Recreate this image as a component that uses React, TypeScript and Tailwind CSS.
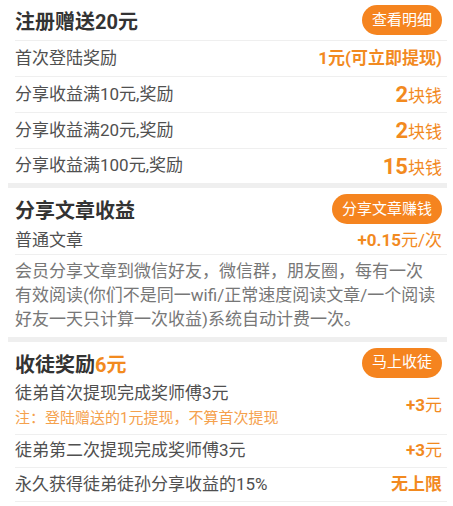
import React from 'react';

const font = { fontFamily: 'Roboto, "Noto Sans CJK SC", sans-serif' };

function Pill({ label }: { label: string }) {
  return (
    <button className="h-[30px] px-[10px] rounded-full bg-[#f5841f] text-white text-[15px] leading-none">
      {label}
    </button>
  );
}

function Row({ left, right, last = false, h = 'h-[36px]' }: { left: React.ReactNode; right: React.ReactNode; last?: boolean; h?: string }) {
  return (
    <div className={`flex items-center justify-between pr-[5px] ${h} ${last ? '' : 'border-b border-[#efefef]'}`}>
      <span className="text-[17px] text-[#505050]">{left}</span>
      <span className="text-[17px] text-[#f28a1f]">{right}</span>
    </div>
  );
}

export default function App() {
  return (
    <div className="w-[453px] h-[506px] overflow-hidden bg-white pl-[8px] pr-[6px]" style={font}>
      {/* 注册赠送 */}
      <section className="pl-[7px]">
        <div className="flex items-center justify-between h-[41px] pr-[5px] border-b border-[#efefef]">
          <h2 className="translate-y-[2px] text-[20px] font-bold text-[#333]">注册赠送20元</h2>
          <Pill label="查看明细" />
        </div>
        <Row left="首次登陆奖励" right={<b>1元(可立即提现)</b>} />
        <Row left="分享收益满10元,奖励" right={<><b className="text-[22px]">2</b>块钱</>} />
        <Row left="分享收益满20元,奖励" right={<><b className="text-[22px]">2</b>块钱</>} />
        <Row last h="h-[34px]" left="分享收益满100元,奖励" right={<><b className="text-[22px]">15</b>块钱</>} />
      </section>
      <div className="h-[5px] bg-[#efefef]" />

      {/* 分享文章收益 */}
      <section className="pl-[7px]">
        <div className="flex items-center justify-between h-[42px] pr-[5px]">
          <h2 className="translate-y-[2px] text-[20px] font-bold text-[#333]">分享文章收益</h2>
          <Pill label="分享文章赚钱" />
        </div>
        <div className="flex items-end justify-between h-[25px] pb-[4px] pr-[5px] border-b border-[#efefef]">
          <span className="text-[17px] leading-[20px] text-[#505050]">普通文章</span>
          <span className="text-[17px] leading-[20px] text-[#f28a1f]"><b>+0.15</b>元/次</span>
        </div>
        <p className="pt-[4px] pb-[6px] text-[17px] leading-[24px] text-[#777] whitespace-nowrap">
          会员分享文章到微信好友，微信群，朋友圈，每有一次<br />
          有效阅读(你们不是同一wifi/正常速度阅读文章/一个阅读<br />
          好友一天只计算一次收益)系统自动计费一次。
        </p>
      </section>
      <div className="h-[5px] bg-[#efefef]" />

      {/* 收徒奖励 */}
      <section className="pl-[7px]">
        <div className="flex items-center justify-between h-[41px] pr-[5px]">
          <h2 className="translate-y-[2px] text-[20px] font-bold text-[#333]">收徒奖励<span className="text-[#f28a1f]">6元</span></h2>
          <Pill label="马上收徒" />
        </div>
        <div className="flex items-center justify-between h-[52px] pr-[5px] pb-[6px] border-b border-[#efefef]">
          <div className="flex flex-col">
            <span className="text-[17px] leading-[20px] text-[#505050]">徒弟首次提现完成奖师傅3元</span>
            <span className="mt-[5px] text-[15px] leading-[20px] text-[#f5a14d]">注：登陆赠送的1元提现，不算首次提现</span>
          </div>
          <span className="text-[17px] text-[#f28a1f]"><b>+3</b>元</span>
        </div>
        <Row h="h-[33px]" left="徒弟第二次提现完成奖师傅3元" right={<><b>+3</b>元</>} />
        <Row h="h-[34px]" left="永久获得徒弟徒孙分享收益的15%" right={<b>无上限</b>} />
      </section>
    </div>
  );
}
